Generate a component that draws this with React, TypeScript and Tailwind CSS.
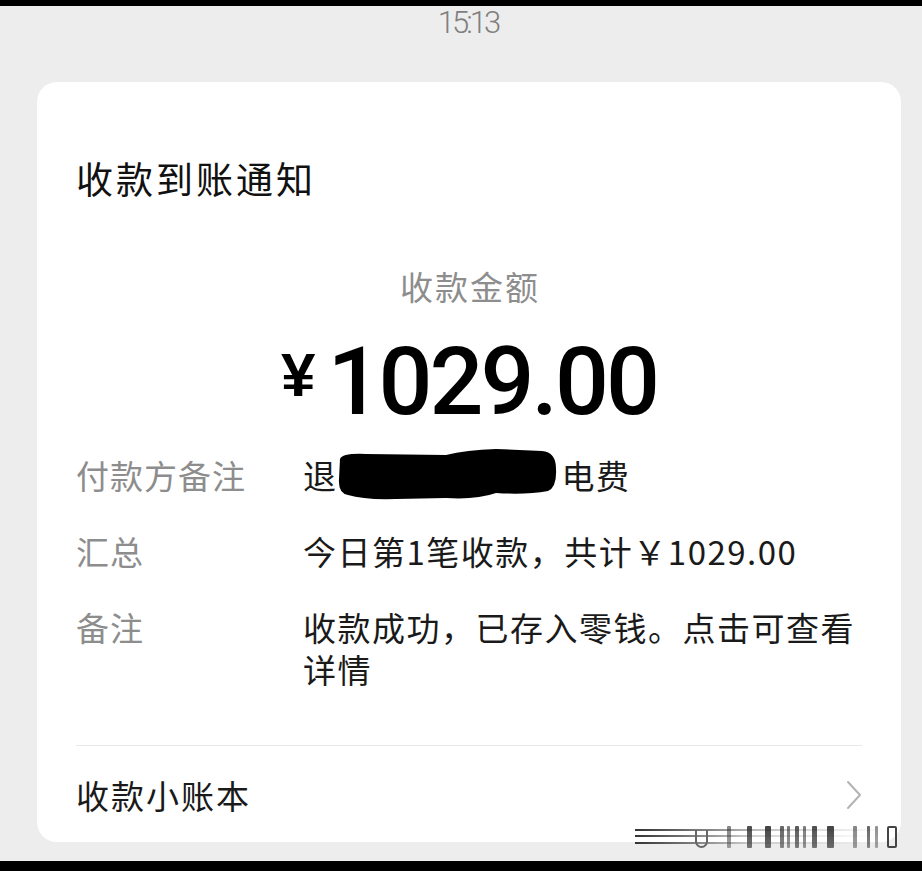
import React from 'react'

const cjk = { fontFamily: '"Noto Sans CJK SC", "Noto Sans", sans-serif' }

// smeared watermark strokes in the bottom-right corner: [x, width, opacity]
const marks: [number, number, number][] = [
  [92, 4, 0.55], [112, 5, 0.8], [130, 6, 0.85], [145, 4, 0.7], [152, 3, 0.6],
  [160, 4, 0.75], [168, 3, 0.6], [177, 5, 0.8], [192, 7, 0.85], [218, 4, 0.55],
  [232, 3, 0.7], [240, 3, 0.5],
]

function Row({ label, children }: { label: string; children: React.ReactNode }) {
  return (
    <>
      <div className="text-[#8d8d8d] tracking-[1px]">{label}</div>
      <div className="text-[#1a1a1a] tracking-[1.5px] whitespace-nowrap">{children}</div>
    </>
  )
}

export default function App() {
  return (
    <div className="relative w-[922px] h-[871px] bg-[#ededed] flex flex-col overflow-hidden" style={cjk}>
      <div className="h-[6px] bg-black" />

      {/* time */}
      <div className="h-[76px] flex justify-center">
        <span
          className="ml-[14px] mt-[1px] text-[31px] leading-[32px] tracking-[-3px] text-[#7f7f7f] font-light"
          style={{ fontFamily: 'Roboto, "Liberation Sans", sans-serif' }}
        >
          15:13
        </span>
      </div>

      {/* card */}
      <div className="ml-[37px] w-[864px] h-[760px] bg-white rounded-[20px] px-[39px] pt-[74px] flex flex-col">
        <h1 className="text-[37px] leading-[44px] tracking-[3px] text-[#111] font-normal">收款到账通知</h1>

        <div className="mt-[66px] text-center text-[33px] leading-[40px] tracking-[2px] text-[#8d8d8d] pl-[2px]">
          收款金额
        </div>

        <div className="mt-[26px] flex justify-center items-start" style={{ fontFamily: 'Roboto, "Liberation Sans", sans-serif' }}>
          <span
            className="mt-[12px] mr-[12px] text-[62px] leading-[62px] font-bold text-black"
            style={{ fontFamily: '"Liberation Sans", sans-serif' }}
          >
            ¥
          </span>
          <span className="text-[95px] leading-[100px] font-medium tracking-[-3px] text-black">1029.00</span>
        </div>

        <div className="mt-[22px] grid grid-cols-[227px_1fr] gap-y-[34px] text-[33px] leading-[42px]">
          <Row label="付款方备注">
            <div className="flex items-center h-[42px]">
              <span>退</span>
              <svg width="222" height="52" viewBox="0 0 222 52" className="shrink-0 -ml-[2px]">
                <path
                  d="M4 10 Q6 4 30 5 L110 6 Q130 1 160 0 L206 2 Q220 3 220 20 Q221 38 212 42 Q190 46 160 44 Q140 51 110 49 L60 50 Q28 51 12 46 Q2 44 3 30 Z"
                  fill="#000"
                />
              </svg>
              <span className="ml-[4px]">电费</span>
            </div>
          </Row>
          <Row label="汇总">今日第1笔收款，共计￥1029.00</Row>
          <Row label="备注">
            收款成功，已存入零钱。点击可查看
            <br />
            详情
          </Row>
        </div>

        <div className="mt-[55px] h-px bg-[#e8e8e8]" />

        <div className="pt-[28px] flex items-center justify-between">
          <span className="text-[33px] leading-[42px] tracking-[2px] text-[#1a1a1a]">收款小账本</span>
          <svg width="18" height="32" viewBox="0 0 18 32" className="mr-[-1px]">
            <path d="M3 3 L15 16 L3 29" fill="none" stroke="#b3b3b3" strokeWidth="2" strokeLinecap="round" strokeLinejoin="round" />
          </svg>
        </div>
      </div>

      <div className="flex-1" />
      <div className="h-[10px] bg-black" />

      {/* watermark */}
      <div className="absolute right-[22px] bottom-[21px] w-[265px] h-[28px] blur-[0.6px]">
        <div className="absolute left-0 top-[7px] w-[250px] h-[2px] bg-gradient-to-r from-[#333] via-[#999]/60 to-transparent" />
        <div className="absolute left-0 top-[13px] w-[240px] h-[2px] bg-gradient-to-r from-[#333] via-[#aaa]/50 to-transparent" />
        <div className="absolute left-0 top-[20px] w-[230px] h-[2px] bg-gradient-to-r from-[#333] via-[#aaa]/50 to-transparent" />
        <div className="absolute left-[60px] top-[8px] w-[13px] h-[18px] border-x-2 border-b-2 border-[#666] rounded-b-[7px]" />
        {marks.map(([x, w, o], i) => (
          <div
            key={i}
            className="absolute top-[4px] h-[22px] bg-gradient-to-b from-[#222] to-[#555] rounded-[1px]"
            style={{ left: x, width: w, opacity: o }}
          />
        ))}
        <div className="absolute left-[252px] top-[4px] w-[10px] h-[22px] border-2 border-[#444] rounded-[2px]" />
      </div>
    </div>
  )
}
